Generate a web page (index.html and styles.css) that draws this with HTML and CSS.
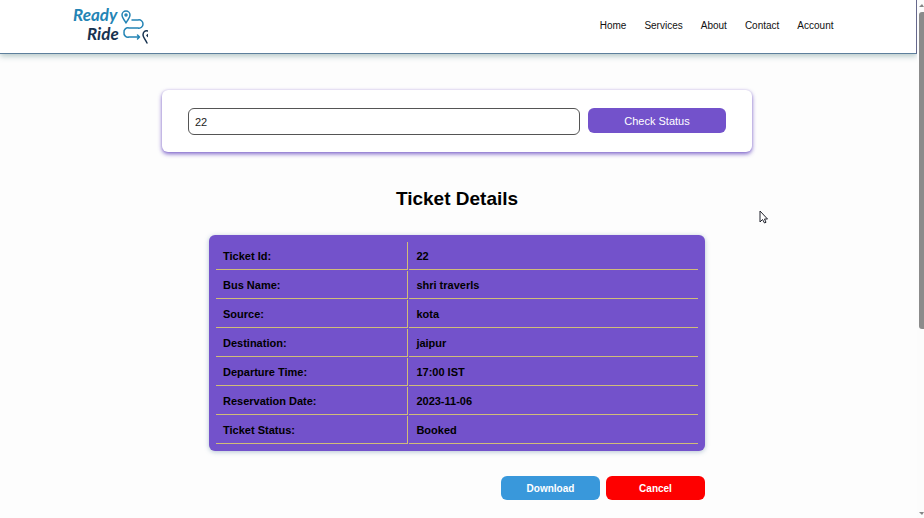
FILE: index.html
```html
<!DOCTYPE html>
<html lang="en">
<head>
<meta charset="utf-8">
<meta name="viewport" content="width=device-width, initial-scale=1">
<title>Ready Ride</title>
<link rel="stylesheet" href="styles.css">
</head>
<body>
<div class="page">
  <header class="header">
    <a class="logo" href="#" aria-label="Ready Ride">
      <svg width="75" height="46" viewBox="0 0 75 46" fill="none" stroke-linecap="round" stroke-linejoin="round">
        <text class="logo-ready" x="0" y="18">Ready</text>
        <text class="logo-ride" x="14" y="37">Ride</text>
        <g stroke="#2384b5" stroke-width="1.5">
          <path d="M53 20C51 16 49 15 49 12a4 4 0 0 1 8 0C57 15 55 16 53 20Z"/>
          <circle cx="53" cy="12" r="1"/>
          <path d="M59 17h6a4 4 0 0 1 5 4 4 4 0 0 1-5 4H56a4 4 0 0 0-5 4.500 4 4 0 0 0 5 4.500h10M64.500 32l2 2-2 2"/>
        </g>
        <path stroke="#17324f" stroke-width="1.500" d="M75 28c-3-1-5 1-5 4 0 2 2 4 4 8M75 31.500l-1 1 1 1"/>
      </svg>
    </a>
    <nav class="nav">
      <a href="#">Home</a>
      <a href="#">Services</a>
      <a href="#">About</a>
      <a href="#">Contact</a>
      <a href="#">Account</a>
    </nav>
  </header>
  <main class="main">
    <form class="search">
      <input class="search-input" type="text" value="22" aria-label="Ticket number">
      <button class="search-button" type="button">Check Status</button>
    </form>
    <h1 class="title">Ticket Details</h1>
    <section class="ticket">
      <table class="details">
        <tbody>
          <tr><th scope="row">Ticket Id:</th><td>22</td></tr>
          <tr><th scope="row">Bus Name:</th><td>shri traverls</td></tr>
          <tr><th scope="row">Source:</th><td>kota</td></tr>
          <tr><th scope="row">Destination:</th><td>jaipur</td></tr>
          <tr><th scope="row">Departure Time:</th><td>17:00 IST</td></tr>
          <tr><th scope="row">Reservation Date:</th><td>2023-11-06</td></tr>
          <tr><th scope="row">Ticket Status:</th><td>Booked</td></tr>
        </tbody>
      </table>
      <div class="actions">
        <button class="action download" type="button">Download</button>
        <button class="action cancel" type="button">Cancel</button>
      </div>
    </section>
  </main>
</div>
<div class="scrollbar" aria-hidden="true">
  <span class="arrow arrow-up"></span>
  <span class="thumb"></span>
  <span class="arrow arrow-down"></span>
</div>
<svg class="cursor" width="10" height="14" viewBox="0 0 10 14" aria-hidden="true">
  <path d="M1 1v11l2.500-2.500L5.500 13 7 12.300 5.500 9H8.500Z" fill="#fff" stroke="#20222c" stroke-width="1"/>
</svg>
</body>
</html>
```
FILE: styles.css
```css
* {
  box-sizing: border-box;
}

body {
  margin: 0;
  display: flex;
  height: 100vh;
  overflow: hidden;
  background: #fdfdfd;
  color: #000;
  font-family: "Liberation Sans", Arial, sans-serif;
  font-size: 11px;
}

button,
input {
  font: inherit;
}

button {
  border: 0;
  border-radius: 6px;
  color: #fff;
}

.page {
  flex: 1;
  min-width: 0;
}

.header {
  display: flex;
  align-items: center;
  justify-content: space-between;
  padding: 3px 9% 4px 8%;
  border-right: 1px solid #66688c;
  border-bottom: 1px solid #5d7f9c;
  background: #fff;
  box-shadow: 0 2px 6px rgba(60, 110, 110, 0.4);
}

.logo svg {
  display: block;
}

.logo text {
  font-family: Lato, "Liberation Sans", sans-serif;
  font-style: italic;
  font-weight: bold;
  font-size: 17px;
}

.logo-ready {
  fill: #2384b5;
}

.logo-ride {
  fill: #17324f;
}

.nav {
  display: flex;
  gap: 18px;
}

.nav a {
  color: #111;
  font-size: 10px;
  line-height: 12px;
  text-decoration: none;
}

.main {
  display: flex;
  flex-direction: column;
  align-items: center;
  padding: 36px 3px 0 0;
}

.search {
  display: flex;
  align-items: flex-start;
  gap: 8px;
  width: 590px;
  max-width: 100%;
  padding: 18px 26px 17px;
  border-radius: 6px;
  background: #fff;
  box-shadow: 0 2px 4px rgba(98, 66, 190, 0.8), 0 0 2px rgba(98, 66, 190, 0.2);
}

.search-input {
  flex: 1;
  min-width: 0;
  height: 27px;
  padding: 0 6px;
  border: 1px solid #555;
  border-radius: 6px;
  background: #fff;
  color: #222;
}

.search-button {
  width: 138px;
  height: 25px;
  background: #7352cb;
}

.title {
  margin: 36px 0 25px;
  font-size: 19px;
  line-height: 22px;
}

.ticket {
  width: 496px;
  max-width: 100%;
}

.details {
  width: 100%;
  padding: 6px;
  border-spacing: 1px;
  border-radius: 6px;
  background: #7352cb;
  box-shadow: 0 1px 5px rgba(70, 110, 150, 0.4);
  font-weight: bold;
}

.details th,
.details td {
  height: 28px;
  padding: 0 7px;
  border-bottom: 1px solid #d0bd78;
  text-align: left;
}

.details th {
  width: 40%;
  border-right: 1px solid #d0bd78;
}

.actions {
  display: flex;
  justify-content: flex-end;
  gap: 6px;
  margin-top: 25px;
}

.action {
  width: 99px;
  height: 24px;
  font-size: 10px;
  font-weight: bold;
}

.download {
  background: #3998db;
}

.cancel {
  background: #fe0000;
}

.scrollbar {
  display: flex;
  flex-direction: column;
  align-items: flex-end;
  width: 7px;
  padding: 4px 0 3px;
  background: #fcfcfc;
}

.arrow {
  border: 3px solid transparent;
  border-right-width: 2px;
}

.arrow-up {
  border-top: 0;
  border-bottom-color: #858585;
}

.arrow-down {
  margin-top: auto;
  border-bottom: 0;
  border-top-color: #858585;
}

.thumb {
  width: 5px;
  height: 62%;
  margin-top: 5px;
  border-radius: 3px 0 0 3px;
  background: #8b8b8b;
}

.cursor {
  position: absolute;
  left: 759px;
  top: 210px;
}
```
